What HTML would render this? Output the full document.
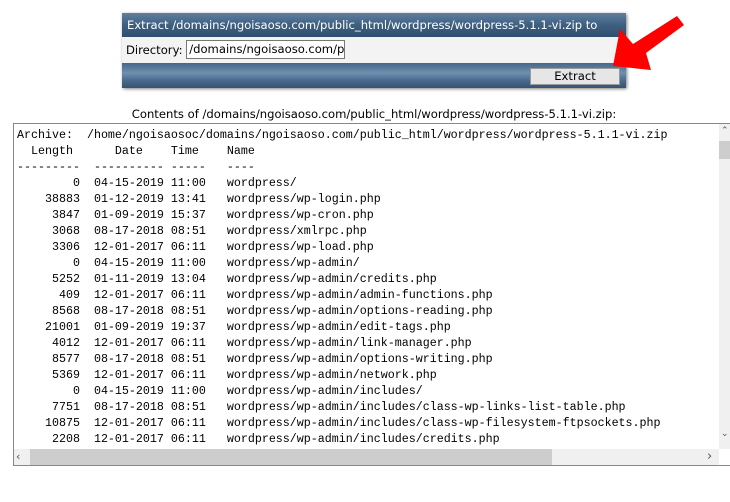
<!DOCTYPE html>
<html><head><style>
body{margin:0;width:730px;height:502px;background:#fff;position:relative;overflow:hidden;font-family:"DejaVu Sans",Verdana,sans-serif;}
.panel{position:absolute;left:122px;top:13px;width:504px;height:75px;box-shadow:1px 1px 3px rgba(0,0,0,.5);border-radius:2px;}
.t{height:24px;background:linear-gradient(#5f7f9f,#3e5f80 50%,#2f4f70);color:#fff;font-size:11.6px;line-height:24px;padding-left:5px;white-space:nowrap;overflow:hidden;}
.d{height:26px;background:#f3f3f3;font-size:11.6px;line-height:26px;padding-left:4px;color:#000;}
.d span.in{display:inline-block;vertical-align:middle;width:155px;height:17px;border:1px solid #777;background:#fff;line-height:17px;padding-left:2px;overflow:hidden;white-space:nowrap;margin-top:-3px}
.b{height:25px;background:linear-gradient(#45658a,#7090b0 40%,#4a6a8e 70%,#33536f);position:relative}
.btn{position:absolute;left:408px;top:5px;width:88px;height:15px;background:#e6e6e6;border:1px solid #999;font-size:11.6px;line-height:15px;text-align:center;}
.cap{position:absolute;left:0;width:748px;top:107px;text-align:center;font-size:11.6px;}
.ta{position:absolute;left:13px;top:123px;width:730px;height:341px;border:1px solid #888;overflow:hidden;}
pre{margin:0;position:absolute;left:3px;top:3px;font-family:"Liberation Mono","Courier New",monospace;font-size:11.67px;line-height:16px;color:#000;}
.vs{position:absolute;left:705px;top:0;width:12px;height:325px;background:#f0f0f0;}
.hs{position:absolute;left:0;top:325px;width:705px;height:16px;background:#f0f0f0;}
</style></head><body>
<div class="panel">
<div class="t">Extract /domains/ngoisaoso.com/public_html/wordpress/wordpress-5.1.1-vi.zip to</div>
<div class="d">Directory: <span class="in">/domains/ngoisaoso.com/p</span></div>
<div class="b"><div class="btn">Extract</div></div>
</div>
<svg style="position:absolute;left:0;top:0" width="730" height="120"><path d="M677 16 L684 25 L646 53 L651 70 L613 66 L620 29 L633 44 Z" fill="#f00"/></svg>
<div class="cap">Contents of /domains/ngoisaoso.com/public_html/wordpress/wordpress-5.1.1-vi.zip:</div>
<div class="ta">
<pre>Archive:  /home/ngoisaosoc/domains/ngoisaoso.com/public_html/wordpress/wordpress-5.1.1-vi.zip
  Length      Date    Time    Name
---------  ---------- -----   ----
        0  04-15-2019 11:00   wordpress/
    38883  01-12-2019 13:41   wordpress/wp-login.php
     3847  01-09-2019 15:37   wordpress/wp-cron.php
     3068  08-17-2018 08:51   wordpress/xmlrpc.php
     3306  12-01-2017 06:11   wordpress/wp-load.php
        0  04-15-2019 11:00   wordpress/wp-admin/
     5252  01-11-2019 13:04   wordpress/wp-admin/credits.php
      409  12-01-2017 06:11   wordpress/wp-admin/admin-functions.php
     8568  08-17-2018 08:51   wordpress/wp-admin/options-reading.php
    21001  01-09-2019 19:37   wordpress/wp-admin/edit-tags.php
     4012  12-01-2017 06:11   wordpress/wp-admin/link-manager.php
     8577  08-17-2018 08:51   wordpress/wp-admin/options-writing.php
     5369  12-01-2017 06:11   wordpress/wp-admin/network.php
        0  04-15-2019 11:00   wordpress/wp-admin/includes/
     7751  08-17-2018 08:51   wordpress/wp-admin/includes/class-wp-links-list-table.php
    10875  12-01-2017 06:11   wordpress/wp-admin/includes/class-wp-filesystem-ftpsockets.php
     2208  12-01-2017 06:11   wordpress/wp-admin/includes/credits.php</pre>
<div class="vs"><div style="position:absolute;top:2px;left:2px;font-size:9px;color:#555">&#8963;</div><div style="position:absolute;top:17px;left:0;width:12px;height:18px;background:#cdcdcd"></div><div style="position:absolute;top:305px;left:2px;font-size:9px;color:#555">&#8964;</div></div>
<div class="hs"><div style="position:absolute;left:16px;top:0;width:522px;height:16px;background:#cdcdcd"></div><div style="position:absolute;left:2px;top:1px;font-size:11px;color:#555">&lsaquo;</div><div style="position:absolute;left:693px;top:0;font-size:13px;color:#555">&rsaquo;</div></div>
</div>
</body></html>
